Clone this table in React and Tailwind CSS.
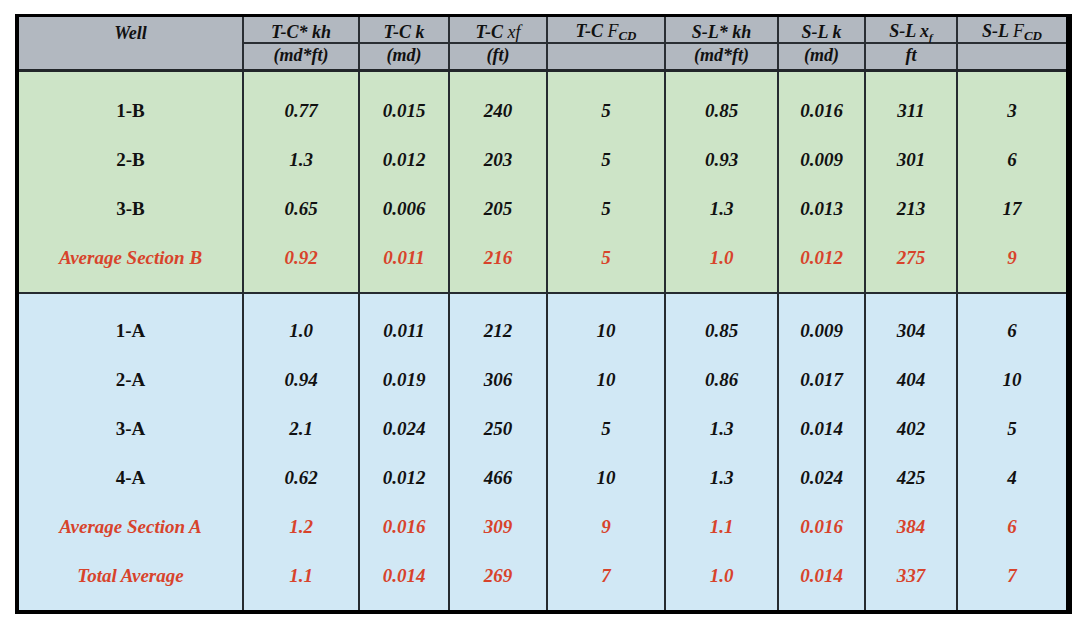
import React from "react";

const greenRows = [
  { cells: ["1-B", "0.77", "0.015", "240", "5", "0.85", "0.016", "311", "3"] },
  { cells: ["2-B", "1.3", "0.012", "203", "5", "0.93", "0.009", "301", "6"] },
  { cells: ["3-B", "0.65", "0.006", "205", "5", "1.3", "0.013", "213", "17"] },
  { cells: ["Average Section B", "0.92", "0.011", "216", "5", "1.0", "0.012", "275", "9"], avg: true },
];

const blueRows = [
  { cells: ["1-A", "1.0", "0.011", "212", "10", "0.85", "0.009", "304", "6"] },
  { cells: ["2-A", "0.94", "0.019", "306", "10", "0.86", "0.017", "404", "10"] },
  { cells: ["3-A", "2.1", "0.024", "250", "5", "1.3", "0.014", "402", "5"] },
  { cells: ["4-A", "0.62", "0.012", "466", "10", "1.3", "0.024", "425", "4"] },
  { cells: ["Average Section A", "1.2", "0.016", "309", "9", "1.1", "0.016", "384", "6"], avg: true },
  { cells: ["Total Average", "1.1", "0.014", "269", "7", "1.0", "0.014", "337", "7"], avg: true },
];

const GRID = "grid grid-cols-[225px_116px_90px_98px_118px_113px_87px_92px_108px]";

function HeadCell({ children, last }) {
  return (
    <div
      className={
        "flex h-[27px] items-center justify-center border-b-2 border-[#2a2e33] pt-[5px] " +
        (last ? "" : "border-r-2")
      }
    >
      {children}
    </div>
  );
}

function SubCell({ children, last }) {
  return (
    <div
      className={
        "flex h-[25px] items-center justify-center border-[#2a2e33] pb-[3px] " +
        (last ? "" : "border-r-2")
      }
    >
      {children}
    </div>
  );
}

function Section({ rows, bg, first, lastPad }) {
  return (
    <div className={GRID + " " + bg}>
      {rows.map((row, ri) =>
        row.cells.map((c, ci) => {
          const pad =
            ri === 0 ? first : ri === rows.length - 1 ? lastPad : "";
          const isName = ci === 0;
          const color = row.avg ? "text-[#d8432b]" : "text-[#111]";
          const style = isName && !row.avg ? "not-italic" : "italic";
          return (
            <div
              key={ri + "-" + ci}
              className={
                "flex items-center justify-center border-[#262b30] " +
                (ci === 8 ? "" : "border-r-2 ") +
                pad
              }
            >
              <div
                className={
                  "flex h-[49px] items-center justify-center text-[19px] font-bold " +
                  color +
                  " " +
                  style
                }
              >
                {c}
              </div>
            </div>
          );
        })
      )}
    </div>
  );
}

export default function App() {
  return (
    <div className="min-h-[630px] w-[1090px] bg-white pl-[15px] pt-[14px] font-['Liberation_Serif','Times_New_Roman',serif]">
      <div className="w-[1057px] border-b-[4px] border-l-[4px] border-r-[6px] border-t-[3px] border-black">
        {/* header */}
        <div
          className={
            GRID +
            " border-b-[3px] border-[#22262a] bg-[#b2b8c0] text-[18px] font-bold italic leading-none text-[#111]"
          }
        >
          <div className="row-span-2 flex flex-col border-r-2 border-[#2a2e33]">
            <div className="flex h-[27px] items-center justify-center pt-[5px]">Well</div>
          </div>
          <HeadCell>T-C* kh</HeadCell>
          <HeadCell>T-C k</HeadCell>
          <HeadCell>
            <span>
              T-C <span className="font-normal">xf</span>
            </span>
          </HeadCell>
          <HeadCell>
            <span>
              T-C <span className="font-normal">F</span>
              <span className="text-[13px] align-[-3px]">CD</span>
            </span>
          </HeadCell>
          <HeadCell>S-L* kh</HeadCell>
          <HeadCell>S-L k</HeadCell>
          <HeadCell>
            <span>
              S-L x<span className="text-[11px] align-[-4px]">f</span>
            </span>
          </HeadCell>
          <HeadCell last>
            <span>
              S-L <span className="font-normal">F</span>
              <span className="text-[13px] align-[-3px]">CD</span>
            </span>
          </HeadCell>

          <SubCell>(md*ft)</SubCell>
          <SubCell>(md)</SubCell>
          <SubCell>(ft)</SubCell>
          <SubCell></SubCell>
          <SubCell>(md*ft)</SubCell>
          <SubCell>(md)</SubCell>
          <SubCell>ft</SubCell>
          <SubCell last></SubCell>
        </div>

        {/* section B */}
        <div className="border-b-2 border-[#262b30]">
          <Section
            rows={greenRows}
            bg="bg-[#cde4c7]"
            first="pt-[15px]"
            lastPad="pb-[9px]"
          />
        </div>

        {/* section A */}
        <Section
          rows={blueRows}
          bg="bg-[#d1e8f5]"
          first="pt-[13px]"
          lastPad="pb-[9px]"
        />
      </div>
    </div>
  );
}
